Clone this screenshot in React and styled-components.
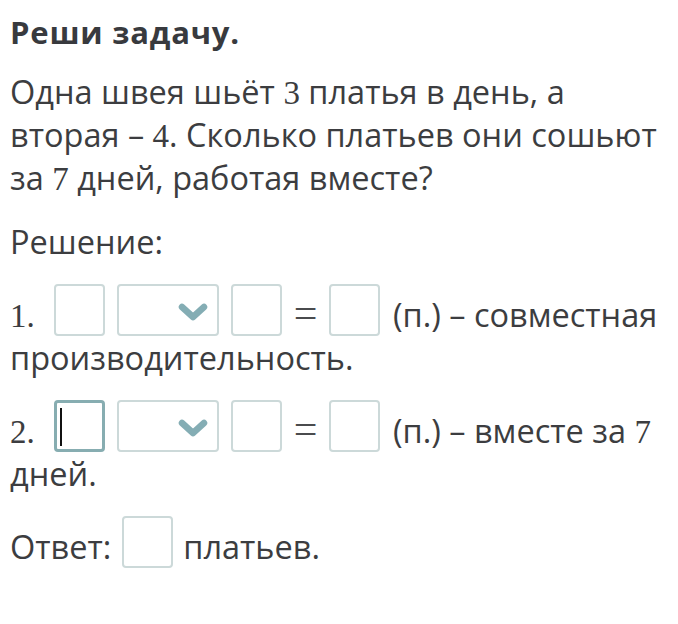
import React from "react";
import styled, { createGlobalStyle } from "styled-components";

const GlobalStyle = createGlobalStyle`
  body {
    margin: 0;
    background: #ffffff;
    font-family: "Open Sans", "Liberation Sans", sans-serif;
    color: #3c3d40;
  }
`;

const Page = styled.div`
  padding: 12px 8px 0 10px;
`;

const Title = styled.h3`
  margin: 0 0 19px;
  font-size: 31px;
  line-height: 40px;
  font-weight: 700;
  letter-spacing: 0.8px;
  color: #383a3e;
`;

const Para = styled.p`
  margin: 0 0 21px;
  font-size: 32.5px;
  line-height: 42px;
`;

const Math = styled.span`
  font-family: "Liberation Serif", "DejaVu Serif", serif;
  font-size: 33px;
`;

const Num = styled(Math)`
  margin-right: 13px;
`;

const Eq = styled.span`
  font-family: "Liberation Serif", serif;
  font-size: 42px;
  margin: 0 6px;
  color: #4a4b4e;
`;

const Field = styled.span`
  position: relative;
  display: inline-block;
  box-sizing: border-box;
  width: ${(p) => (p.$wide ? 102 : 51)}px;
  height: 52px;
  margin: 0 ${(p) => p.$r ?? 6}px 0 ${(p) => p.$l ?? 6}px;
  vertical-align: -9px;
  border: ${(p) => (p.$focused ? "3px solid #87adb1" : "2px solid #ccd9d9")};
  border-radius: 4px;
  background: #fff;
`;

const Caret = styled.span`
  position: absolute;
  left: 3px;
  top: 5px;
  width: 2px;
  height: 38px;
  background: #111;
`;

const Chevron = styled.svg`
  position: absolute;
  right: 9px;
  top: 17px;
  width: 30px;
  height: 20px;
`;

const Select = () => (
  <Field $wide>
    <Chevron viewBox="0 0 30 20">
      <path
        d="M4 4 L15 14 L26 4"
        fill="none"
        stroke="#84adb4"
        strokeWidth="6.5"
        strokeLinecap="round"
        strokeLinejoin="round"
      />
    </Chevron>
  </Field>
);

const Step = ({ n, focused, children }) => (
  <Para>
    <Num>{n}.</Num>
    <Field $focused={focused}>{focused && <Caret />}</Field>
    <Select />
    <Field />
    <Eq>=</Eq>
    <Field $r={4} /> {children}
  </Para>
);

export default function App() {
  return (
    <Page>
      <GlobalStyle />
      <Title>Реши задачу.</Title>
      <Para>
        Одна швея шьёт <Math>3</Math> платья в день, а вторая – <Math>4</Math>.
        Сколько платьев они сошьют за <Math>7</Math> дней, работая вместе?
      </Para>
      <Para>Решение:</Para>
      <Step n={1}>(п.) – совместная производительность.</Step>
      <Step n={2} focused>
        (п.) – вместе за <Math>7</Math> дней.
      </Step>
      <Para>
        Ответ: <Field $l={2} $r={2} /> платьев.
      </Para>
    </Page>
  );
}
